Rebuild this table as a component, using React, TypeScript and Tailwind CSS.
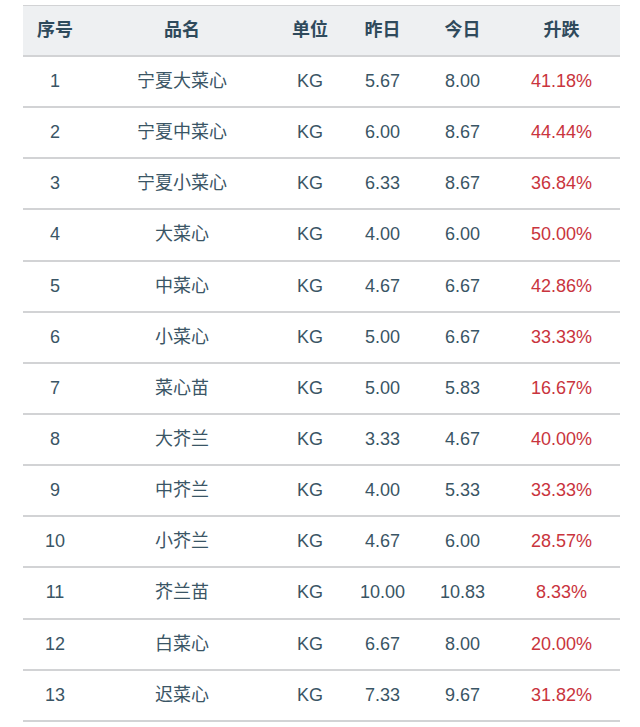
import React from 'react';

interface Row {
  id: number;
  name: string;
  unit: string;
  yesterday: string;
  today: string;
  change: string;
}

const rows: Row[] = [
  { id: 1, name: '宁夏大菜心', unit: 'KG', yesterday: '5.67', today: '8.00', change: '41.18%' },
  { id: 2, name: '宁夏中菜心', unit: 'KG', yesterday: '6.00', today: '8.67', change: '44.44%' },
  { id: 3, name: '宁夏小菜心', unit: 'KG', yesterday: '6.33', today: '8.67', change: '36.84%' },
  { id: 4, name: '大菜心', unit: 'KG', yesterday: '4.00', today: '6.00', change: '50.00%' },
  { id: 5, name: '中菜心', unit: 'KG', yesterday: '4.67', today: '6.67', change: '42.86%' },
  { id: 6, name: '小菜心', unit: 'KG', yesterday: '5.00', today: '6.67', change: '33.33%' },
  { id: 7, name: '菜心苗', unit: 'KG', yesterday: '5.00', today: '5.83', change: '16.67%' },
  { id: 8, name: '大芥兰', unit: 'KG', yesterday: '3.33', today: '4.67', change: '40.00%' },
  { id: 9, name: '中芥兰', unit: 'KG', yesterday: '4.00', today: '5.33', change: '33.33%' },
  { id: 10, name: '小芥兰', unit: 'KG', yesterday: '4.67', today: '6.00', change: '28.57%' },
  { id: 11, name: '芥兰苗', unit: 'KG', yesterday: '10.00', today: '10.83', change: '8.33%' },
  { id: 12, name: '白菜心', unit: 'KG', yesterday: '6.67', today: '8.00', change: '20.00%' },
  { id: 13, name: '迟菜心', unit: 'KG', yesterday: '7.33', today: '9.67', change: '31.82%' },
];

const cols = 'grid grid-cols-[64px_190px_66px_79px_81px_117px] items-center text-center';

const App: React.FC = () => {
  return (
    <div
      className="min-h-screen bg-white pt-[5px] pl-[23px] text-[18px] text-[#3a5565]"
      style={{ fontFamily: '"Liberation Sans", "Noto Sans CJK SC", sans-serif' }}
    >
      <div className="w-[597px]">
        {/* header */}
        <div className={`${cols} h-[52px] bg-[#eef0f2] border-t border-b-2 border-[#d2d3d5] font-bold text-[#2f4a5c]`}>
          <div>序号</div>
          <div>品名</div>
          <div>单位</div>
          <div>昨日</div>
          <div>今日</div>
          <div>升跌</div>
        </div>

        {rows.map((r) => (
          <div key={r.id} className={`${cols} h-[51.15px] border-b-2 border-[#d2d3d5]`}>
            <div>{r.id}</div>
            <div>{r.name}</div>
            <div>{r.unit}</div>
            <div>{r.yesterday}</div>
            <div>{r.today}</div>
            <div className="text-[#c9343d]">{r.change}</div>
          </div>
        ))}
      </div>
    </div>
  );
};

export default App;
